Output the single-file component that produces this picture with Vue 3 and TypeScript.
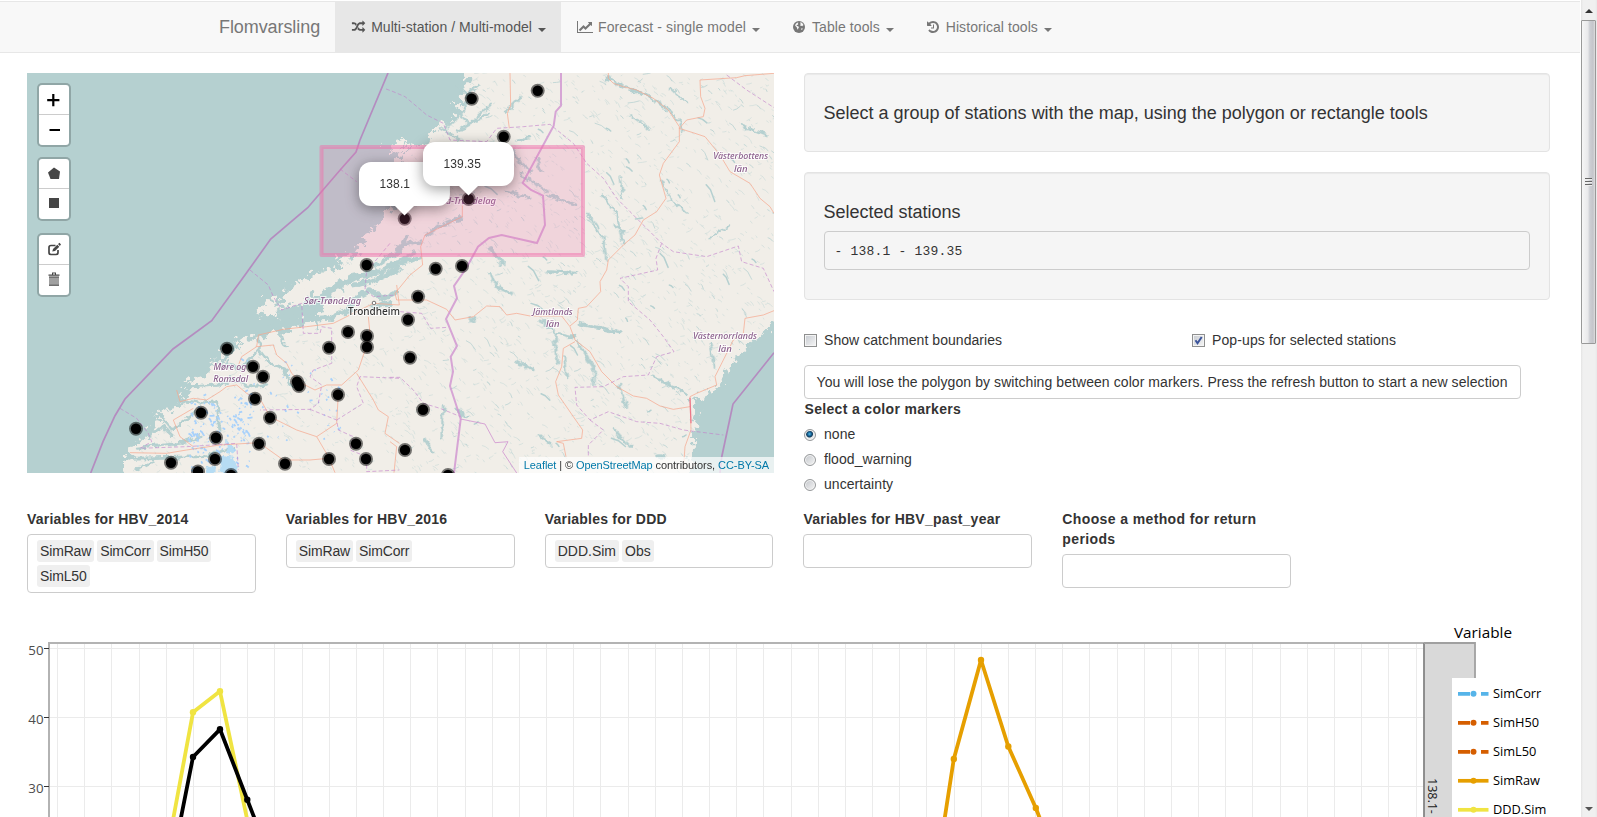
<script setup lang="ts">
interface Popup { id: string; left: number; top: number }
interface VariableSet { label: string; items: string[]; wide?: boolean }
interface Series { name: string; color: string; points: number[][] }
interface LegendEntry { name: string; color: string; dashed: boolean }

const stations: number[][] = [
  [471.7, 98.7], [537.7, 90.7], [503.7, 136.7], [468.7, 199], [404.7, 218.7], [435.7, 268.7], [462, 266],
  [366.7, 265], [227, 348.7], [348, 332], [367, 336], [367, 347], [329, 347.7], [253, 366.7], [263, 376.7],
  [297, 381.7], [299, 386], [338, 394.7], [255, 398.7], [201, 412.7], [270, 417.7], [136, 428.7], [216, 437.7],
  [259, 443.7], [356, 443.7], [171, 462.7], [215, 459], [198, 471.5], [231, 475], [285, 463.7], [329, 459],
  [366, 459], [418, 296.7], [408, 319.7], [410, 357.7], [423, 409.7], [405, 450], [448, 475],
]

const popups: Popup[] = [
  { id: '138.1', left: 332, top: 89 },
  { id: '139.35', left: 396, top: 69 },
]

const variableSets: VariableSet[] = [
  { label: 'Variables for HBV_2014', items: ['SimRaw', 'SimCorr', 'SimH50', 'SimL50'] },
  { label: 'Variables for HBV_2016', items: ['SimRaw', 'SimCorr'] },
  { label: 'Variables for DDD', items: ['DDD.Sim', 'Obs'] },
  { label: 'Variables for HBV_past_year', items: [] },
  { label: 'Choose a method for return periods', items: [], wide: true },
]

const markerModes = ['none', 'flood_warning', 'uncertainty']

// Small deterministic generator, so the lakes keep their place between renders.
let seed = 4711
function rnd(): number {
  seed = (seed * 1664525 + 1013904223) % 4294967296
  return seed / 4294967296
}
function streaks(count: number, x0: number, y0: number, w: number, h: number, size: number): string {
  let d = ''
  for (let i = 0; i < count; i++) {
    const x = x0 + rnd() * w
    const y = y0 + rnd() * h
    const len = size * (0.25 + rnd() * rnd() * 1.6)
    const a = rnd() < 0.8 ? 0.5 + rnd() * 0.6 : -0.6 + rnd() * 0.5
    const dx = Math.cos(a) * len
    const dy = Math.sin(a) * len
    d += `M${x.toFixed(1)} ${y.toFixed(1)}l${(dx * 0.5).toFixed(1)} ${(dy * 0.3).toFixed(1)} ${(dx * 0.5).toFixed(1)} ${(dy * 0.7).toFixed(1)}`
  }
  return d
}
const thinLakes = streaks(1700, 400, 73, 374, 400, 4.5) + streaks(420, 120, 330, 300, 143, 4)
const midLakes = streaks(200, 440, 73, 334, 400, 9)
const bigLakes = streaks(34, 460, 80, 300, 370, 14)
const glaciers = streaks(150, 188, 395, 62, 78, 3.5) + streaks(50, 240, 350, 100, 90, 3)

const gridX = Array.from({ length: 51 }, (_, i) => Math.round(57 + i * 27.17) + 0.5)
const ticks = [
  { label: '50', y: 648.5 },
  { label: '40', y: 717.5 },
  { label: '30', y: 786.5 },
]
const series: Series[] = [
  { name: 'DDD.Sim', color: '#F0E442', points: [[165, 863], [193, 712.3], [220, 691.3], [247.5, 821]] },
  { name: 'Obs', color: '#000000', points: [[170, 873], [193, 757], [220, 729.3], [247.3, 799.7], [273, 866]] },
  { name: 'SimRaw', color: '#E69F00', points: [[930, 914], [953.8, 759], [981, 660], [1008.3, 746.5], [1035.8, 808], [1060, 870]] },
]
const legend: LegendEntry[] = [
  { name: 'SimCorr', color: '#56B4E9', dashed: true },
  { name: 'SimH50', color: '#D55E00', dashed: true },
  { name: 'SimL50', color: '#D55E00', dashed: true },
  { name: 'SimRaw', color: '#E69F00', dashed: false },
  { name: 'DDD.Sim', color: '#F0E442', dashed: false },
]
function toPoints(p: number[][]): string {
  return p.map((c) => c.join(',')).join(' ')
}
</script>

<template>
  <div class="window">
    <div class="page">
      <nav class="navbar">
        <div class="nav-inner">
          <a class="brand">Flomvarsling</a>
          <a class="nav-link active">
            <svg class="fa" viewBox="-256 0 2304 1792"><path d="M666 481q-60 92-137 273-22-45-37-72.500t-40.500-63.500-51-56.500-63-35-81.500-14.500h-224q-14 0-23-9t-9-23v-192q0-14 9-23t23-9h224q250 0 410 225zm1126 799q0 14-9 23l-320 320q-9 9-23 9-13 0-22.500-9.500t-9.500-22.500v-192q-32 0-85 .5t-81 1-73-1-71-5-64-10.500-63-18.500-58-28.500-59-40-55-53.500-56-69.500q59-93 136-273 22 45 37 72.500t40.500 63.500 51 56.500 63 35 81.500 14.500h256v-192q0-14 9-23t23-9q12 0 24 10l319 319q9 9 9 23zm0-896q0 14-9 23l-320 320q-9 9-23 9-13 0-22.500-9.500t-9.500-22.500v-192h-256q-48 0-87 15t-69 45-51 61.500-45 77.500q-32 62-78 171-29 66-49.500 111t-54 105-64 100-74 83-90 68.500-106.500 42-128 16.500h-224q-14 0-23-9t-9-23v-192q0-14 9-23t23-9h224q48 0 87-15t69-45 51-61.500 45-77.500q32-62 78-171 29-66 49.500-111t54-105 64-100 74-83 90-68.500 106.500-42 128-16.500h256v-192q0-14 9-23t23-9q12 0 24 10l319 319q9 9 9 23z" /></svg>
            <span>Multi-station / Multi-model</span><i class="caret"></i>
          </a>
          <a class="nav-link forecast">
            <svg class="fa" viewBox="-128 0 2304 1792"><path d="M2048 1536v128H0V128h128v1408h1920zM1920 288v435q0 21-19.500 29.500T1865 745l-121-121-633 633q-10 10-23 10t-23-10l-233-233-416 416-192-192 585-585q10-10 23-10t23 10l233 233 464-464-121-121q-16-16-7.500-35.500T1453 256h435q14 0 23 9t9 23z" /></svg>
            <span>Forecast - single model</span><i class="caret"></i>
          </a>
          <a class="nav-link">
            <svg class="fa" viewBox="-256 0 2304 1792"><circle cx="896" cy="896" r="768" /><path class="continent" d="M480 520l130-150 160-60 50 70-90 60 80 60-60 110-120 30-60 90 110 50 150 60 60 90-80 110-40 130-70 40-50-160-60-150-120-110-80-130zM1060 270l150 50 200 190 60 150-90 40-60 110-80-60-110 20-80-90 60-120-70-60 70-90zM1210 1050l110 20 50 80-130 140-60-90z" /></svg>
            <span>Table tools</span><i class="caret"></i>
          </a>
          <a class="nav-link">
            <svg class="fa" viewBox="-256 0 2304 1792"><path d="M1664 896q0 156-61 298t-164 245-245 164-298 61q-172 0-327-72.500t-264-204.500q-7-10-6.500-22.500t8.500-20.500l137-138q10-9 25-9 16 2 23 12 73 95 179 147t225 52q104 0 198.500-40.500t163.500-109.500 109.500-163.500 40.500-198.500-40.500-198.500-109.500-163.500-163.500-109.500-198.500-40.500q-98 0-188 35.500t-160 101.500l137 138q31 30 14 69-17 40-59 40h-448q-26 0-45-19t-19-45v-448q0-42 40-59 39-17 69 14l130 129q107-101 244.500-156.500t284.500-55.500q156 0 298 61t245 164 164 245 61 298zm-640-288v448q0 14-9 23t-23 9h-320q-14 0-23-9t-9-23v-64q0-14 9-23t23-9h224v-352q0-14 9-23t23-9h64q14 0 23 9t9 23z" /></svg>
            <span>Historical tools</span><i class="caret"></i>
          </a>
        </div>
      </nav>

      <div class="top-row">
        <div class="map">
          <svg class="map-canvas" width="747" height="400" viewBox="27 73 747 400">
            <defs>
              <filter id="rough" x="-5%" y="-5%" width="110%" height="110%">
                <feTurbulence type="fractalNoise" baseFrequency="0.13" numOctaves="4" seed="8" result="n" />
                <feDisplacementMap in="SourceGraphic" in2="n" scale="24" xChannelSelector="R" yChannelSelector="G" />
              </filter>
              <filter id="wobble" x="-5%" y="-5%" width="110%" height="110%">
                <feTurbulence type="fractalNoise" baseFrequency="0.14" numOctaves="3" seed="3" result="n" />
                <feDisplacementMap in="SourceGraphic" in2="n" scale="8" xChannelSelector="R" yChannelSelector="G" />
              </filter>
              <clipPath id="inland">
                <path d="M468 73L464 100 450 122 430 136 408 152 400 205 384 214 366 240 372 258 345 275 325 296 318 318 270 340 240 352 205 380 185 400 165 420 145 440 132 473H688L694 437 698 412 690 400 714 388 725 368 742 346 774 318V73Z" />
              </clipPath>
            </defs>
            <rect class="sea" x="27" y="73" width="747" height="400" />
            <g filter="url(#rough)">
              <path class="land" d="M468 60L466 88 460 106 450 120 436 130 426 139 413 146 396 158 400 178 394 206 384 214 376 228 356 245 362 254 346 262 336 272 320 284 326 294 332 298 324 308 312 318 288 331 264 335 252 338 236 348 226 360 214 366 196 384 181 402 166 414 154 430 134 445 124 465 126 490H692L693 437 698 412 692 399 715 390 727 370 743 350 757 337 790 306V60Z" />
              <path class="land" d="M386 152l6-9 12-4 6 6-10 9zM258 306l12-8 11 7-4 10-12 4zM282 294l10-9 20-4 12-7 8 4-14 15-20 12-16 2 4-8zM300 284l26-16 12 1-12 13-14 7zM198 378l8-6 5 3-8 8zM184 388l8-7 5 2-7 9zM154 416l10-5 8 4-9 8zM237 339l10-6 8 4-8 8zM354 245l14-8 5 6-10 8zM212 358l10-6 4 4-8 6zM336 262l12-8 4 4-10 7z" />
            </g>
            <g class="fjords" filter="url(#wobble)">
              <g transform="translate(20 270) scale(.333333)">
                <path d="M690 205L770 165 850 150 930 145 990 115" stroke-width="14" />
                <path d="M780 122L860 124 930 62 1000 22 1080 5" stroke-width="20" />
                <path d="M980 130L1000 85 1050 60 1090 85 1128 65M1060 110L1110 100" stroke-width="17" />
                <path d="M715 195L720 240 750 280 795 300 815 355" stroke-width="9" />
                <path d="M600 280L665 295 720 235M630 320L690 350 740 345" stroke-width="10" />
                <path d="M480 390L540 400 590 395 600 480M510 350L600 345 660 325" stroke-width="9" />
                <path d="M420 430L455 480 520 430M385 500L430 470 460 500M355 535L480 520 540 500" stroke-width="9" />
                <path d="M330 565L430 562 560 560 640 530M350 600L400 575" stroke-width="8" />
                <path d="M1070 -15L1138 -60 1160 -100M1000 45L1060 35 1138 -5" stroke-width="15" />
                <path d="M775 190L800 230M880 130L890 180M950 40L970 60" stroke-width="7" />
              </g>
              <g transform="translate(390 65) scale(.333333)">
                <path d="M200 60L245 100 210 150 170 190M225 90L270 60M185 130L240 175 300 120M350 140L390 100M150 190L210 225M200 200L290 150" stroke-width="8" />
                <path d="M110 510L150 480 212 460M70 560L20 600 -30 620M30 545L90 530M0 600L90 580M300 550L340 600" stroke-width="13" />
                <path d="M370 255L395 300 425 320M440 280L455 320M390 325L470 380M380 225L420 215M345 375L420 400M470 390L560 420" stroke-width="8" />
                <path d="M650 40L720 75 780 95 830 130 865 165 880 200M700 400L690 340M640 390L680 450 700 540M590 440L640 520 650 590" stroke-width="7" />
                <path d="M840 70L890 115M720 150L780 195M670 480L700 500M810 345L850 410 890 440M1050 180L1130 210M960 520L1020 480" stroke-width="6" />
              </g>
              <g transform="translate(390 270) scale(.333333)">
                <path d="M300 10L315 45 365 70M450 150L495 185 500 280M500 190L555 200M560 215L610 290 610 345M525 260L530 320M570 160L690 185M475 5L560 10" stroke-width="9" />
                <path d="M160 405L155 500M110 510L130 550M200 420L235 440M450 495L480 520M670 475L720 530M690 345L710 410M790 320L890 375M960 220L975 290M380 275L430 300" stroke-width="8" />
                <ellipse cx="810" cy="558" rx="17" ry="8" class="lake" />
                <ellipse cx="248" cy="150" rx="10" ry="9" class="lake" />
              </g>
            </g>
            <g class="fjords" clip-path="url(#inland)">
              <path :d="thinLakes" stroke-width=".65" opacity=".6" />
              <path :d="midLakes" stroke-width="1" opacity=".75" />
              <path :d="bigLakes" stroke-width="1.500" />
              <path :d="glaciers" class="glacier" stroke-width="1.800" />
            </g>
            <g filter="url(#wobble)">
              <path class="glacier-fill" d="M222 455l12 2 5 10-4 8-16-1zM226 441l6 3 2 8-6 3zM208 466l8 3-2 6-9-2z" />
            </g>

            <g class="roads">
              <g transform="translate(20 270) scale(.333333)">
                <path d="M1045 140L1050 190 1032 250 1015 300 965 345 920 345 885 360 855 345 835 330 815 310 800 280 770 255 760 225 710 230 715 195 790 178 860 170 940 160 1000 130 1060 100 1138 105 1130 45" />
                <path d="M955 370L950 460 890 500 830 480 790 460 750 440 725 395 680 370 650 345 620 350 600 365 560 390 520 385 480 395 470 360M710 230L665 260 650 300" />
                <path d="M890 500L925 560 945 608M1010 310L1060 390 1075 420 1105 440 1095 490 1138 520M330 548L440 550 500 540 600 525 717 518 790 570 870 570 925 565M520 415L460 450 480 500 520 530" />
              </g>
              <g transform="translate(390 65) scale(.333333)">
                <path d="M360 24L362 120 352 145 358 190M655 24L655 40 670 55 700 65 740 75 790 100 835 135 868 185 868 230 820 295 808 330 828 400 800 440 760 465 735 510 700 540 655 585 650 615 630 650 632 680 590 725 565 730 562 765 540 783" />
                <path d="M1152 25L1065 32 1040 38 930 45 932 95 945 130 940 155 890 165 868 190 915 205 945 215 990 270 1020 320 1080 355 1110 400 1140 425 1152 445M217 400L217 455 170 478 105 510 92 545 98 600 60 630 15 685 20 705 110 705" />
              </g>
              <g transform="translate(390 270) scale(.333333)">
                <path d="M110 90L170 118 195 150 250 140 290 108 330 110 350 135 380 130 420 138 515 138 540 170 555 210 600 245 635 305 680 350 730 378 770 385 810 408 850 418 900 410M555 215L520 235 515 290 497 335 505 375 550 440 578 480 575 505 500 515 520 520 528 560M0 515L20 530 12 608" />
                <path d="M1152 122L1120 135 1065 145 1060 190 1030 210 1000 270 975 320 980 345 920 370 900 380 903 480 885 530 880 600" />
                <path class="red-road" d="M900 383L903 460" />
              </g>
            </g>

            <g class="dashes">
              <g transform="translate(20 270) scale(.333333)">
                <path d="M690 0L745 45 760 80 785 120 845 100 850 190 900 190 905 170 935 175 935 280 880 300 870 320 905 345 895 400 870 418 720 420M870 418L950 450 955 480 1000 500 990 540 1040 560 1040 605 1138 600M950 450L1030 400 1010 350 1020 320 1138 325M300 415L350 445 385 490 395 515 360 535 500 530 650 520 655 600M1110 -80L1060 -20 1040 0 1035 60 1060 80 1128 75" />
              </g>
              <g transform="translate(390 65) scale(.333333)">
                <path d="M-12 72L5 78 45 95 75 120 110 150 160 175 180 225 290 230 320 190 400 185 480 178 550 235 590 295 640 340 680 400 720 440 770 490 815 535 850 560 950 575 1045 543 1055 590 1120 610 1152 680M1010 30L1070 75 1152 128M815 535L798 580 803 615 690 640 715 665 715 710 780 765 820 815 852 860 800 875 775 930 700 935 640 965 555 967 560 1020 600 1065 655 1040 740 1070 810 1075 880 1095 1000 1110M600 1065L640 1095 595 1140 595 1175M-150 312L-100 350" />
                <path d="M0 937L30 937 70 975 100 1015 150 1030 212 1055M30 740L95 745 122 790 175 787" />
              </g>
            </g>
            <g class="borders">
              <path d="M388 73L360 140 356 152 341 169 307.700 207.700 270.700 239 245 275 211.700 320.700 173 349 125 399 115 415.700 103 441.700 90.700 473" />
              <path d="M561 73V105.700L555.700 111.700 553.700 125.700 522.700 183 531 190 543 195.700 545 225 537 243 501.700 235 489 238 478 246.700 467 266.700 463 273 454 286 457 298 446 319 457 346 450.700 356.700 453 371.700 450 386 460.700 419 454 473" class="national" />
              <path d="M774 352.700L733 404 721.700 457 720 473" />
              <path d="M460.700 419L485 424 495 442.700 508 441.700 502.700 451.700 516.700 473" class="county" />
            </g>

            <g class="place-names">
              <text x="463" y="203.700" textLength="66" lengthAdjust="spacingAndGlyphs">Nord-Trøndelag</text>
              <text x="740.700" y="159" textLength="55" lengthAdjust="spacingAndGlyphs">Västerbottens</text>
              <text x="740.700" y="171.500">län</text>
              <text x="552.700" y="314.700" textLength="40" lengthAdjust="spacingAndGlyphs">Jämtlands</text>
              <text x="552.700" y="326.500">län</text>
              <text x="725" y="339" textLength="64" lengthAdjust="spacingAndGlyphs">Västernorrlands</text>
              <text x="725" y="351.500">län</text>
              <text x="332.500" y="303.500" textLength="57" lengthAdjust="spacingAndGlyphs">Sør-Trøndelag</text>
              <text x="230" y="369.700" textLength="33" lengthAdjust="spacingAndGlyphs">Møre og</text>
              <text x="230.700" y="382" textLength="35" lengthAdjust="spacingAndGlyphs">Romsdal</text>
              <text x="374" y="314.700" class="town" textLength="52" lengthAdjust="spacingAndGlyphs">Trondheim</text>
            </g>
            <circle cx="374" cy="303" r="1.800" fill="#fff" stroke="#555" stroke-width=".8" />

            <g v-for="(s, i) in stations" :key="i">
              <circle :cx="s[0]" :cy="s[1]" r="7" fill="#000" opacity=".52" />
              <circle :cx="s[0]" :cy="s[1]" r="5.200" fill="#000" />
            </g>
            <rect class="selection" x="321.500" y="147" width="261.500" height="108" />
          </svg>

          <div v-for="p in popups" :key="p.id" class="popup" :style="{ left: p.left + 'px', top: p.top + 'px' }">
            <div class="popup-body">{{ p.id }}</div>
            <div class="tip-box"><div class="tip"></div></div>
          </div>

          <div class="controls">
            <div class="bar">
              <a><svg viewBox="0 0 30 30"><path d="M13.200 9h2.200v5h5v2.200h-5v5h-2.200v-5h-5V14h5z" fill="#000" /></svg></a>
              <a><svg viewBox="0 0 30 30"><path d="M10.500 14h10.500v2H10.500z" fill="#000" /></svg></a>
            </div>
            <div class="bar">
              <a><svg viewBox="0 0 30 30"><path d="M15 8.500L21 12.500 20 20H11.500L9 13.500z" fill="#464646" /></svg></a>
              <a><svg viewBox="0 0 30 30"><rect x="10" y="9" width="10" height="10" fill="#464646" /></svg></a>
            </div>
            <div class="bar edit">
              <a><svg viewBox="0 0 30 30"><path d="M16.500 10.500H12q-2 0-2 2v5q0 2 2 2h5q2 0 2-2v-2.500" fill="none" stroke="#464646" stroke-width="1.700" /><path d="M13.300 16.600l.7-2.700 4.300-4.200 2 2-4.300 4.200zM19 9l1.500-1.300 1.500 1.800L20.800 11z" fill="#464646" /></svg></a>
              <a><svg viewBox="0 0 30 30"><path d="M10 12h10v8.200H10z" fill="#a0a0a0" /><path d="M10 11.500h10v.9H10zM9.500 9.500h11v1.200h-11zM13 7.500h4v.9h-4zM13 7.500h1v2h-1zM16 7.500h1v2h-1zM10 19.700h10v1H10z" fill="#464646" /></svg></a>
            </div>
          </div>
          <div class="attribution"><a>Leaflet</a> | © <a>OpenStreetMap</a> contributors, <a>CC-BY-SA</a></div>
        </div>

        <div class="side">
          <div class="well intro"><h4>Select a group of stations with the map, using the polygon or rectangle tools</h4></div>
          <div class="well chosen">
            <h4>Selected stations</h4>
            <pre>- 138.1 - 139.35</pre>
          </div>
          <div class="checks">
            <label><span class="checkbox"></span>Show catchment boundaries</label>
            <label class="popup-toggle"><span class="checkbox"><svg viewBox="0 0 13 13"><path d="M3.500 6.300L5.500 9.200 9.700 3" fill="none" stroke="#3b549b" stroke-width="2" /></svg></span>Pop-ups for selected stations</label>
          </div>
          <div class="notice">You will lose the polygon by switching between color markers. Press the refresh button to start a new selection</div>
          <div class="group-label">Select a color markers</div>
          <label v-for="(m, i) in markerModes" :key="m" class="radio-line"><span class="radio" :class="{ on: i === 0 }"></span>{{ m }}</label>
        </div>
      </div>

      <div class="variables">
        <div v-for="v in variableSets" :key="v.label" class="variable">
          <div class="variable-label" :class="{ wide: v.wide }">{{ v.label }}</div>
          <div class="select">
            <span v-for="item in v.items" :key="item" class="chip" :class="{ tight: item.startsWith('Sim') }">{{ item }}</span>
          </div>
        </div>
      </div>

      <svg class="chart" width="1580" height="217" viewBox="0 600 1580 217">
        <g stroke="#ebebeb" stroke-width="1">
          <line v-for="x in gridX" :key="x" :x1="x" :x2="x" y1="643" y2="817" />
          <line v-for="t in ticks" :key="t.label" x1="49" x2="1424" :y1="t.y" :y2="t.y" />
        </g>
        <g v-for="s in series" :key="s.name">
          <polyline :points="toPoints(s.points)" fill="none" :stroke="s.color" stroke-width="3.800" stroke-linejoin="round" />
          <circle v-for="(p, i) in s.points" :key="i" :cx="p[0]" :cy="p[1]" r="3.200" :fill="s.color" />
        </g>
        <path d="M49 817V643H1424" fill="none" stroke="#b3b3b3" stroke-width="2" />
        <rect x="1424" y="643" width="51" height="190" fill="#d9d9d9" />
        <path d="M1424 817V643" stroke="#858585" stroke-width="1.800" />
        <path d="M1424 643H1475V817" fill="none" stroke="#a0a0a0" stroke-width="1.800" />
        <g v-for="t in ticks" :key="t.label">
          <line x1="44" x2="49" :y1="t.y" :y2="t.y" stroke="#333" />
          <text x="43.500" :y="t.y + 6" text-anchor="end" class="tick">{{ t.label }}</text>
        </g>
        <text class="strip" transform="translate(1428 778) rotate(90)">138.1-</text>
        <rect x="1452" y="678" width="128" height="150" fill="#fff" />
        <text x="1454" y="637.500" class="legend-title">Variable</text>
        <g v-for="(l, i) in legend" :key="l.name" :transform="`translate(0 ${693.8 + i * 29})`">
          <path :d="l.dashed ? 'M1458 0h12M1481 0h7.500' : 'M1458 0h30.500'" :stroke="l.color" stroke-width="3.700" />
          <circle cx="1473.500" cy="0" r="3" :fill="l.color" />
          <text x="1493" y="4" class="legend-text">{{ l.name }}</text>
        </g>
      </svg>
    </div>

    <div class="scrollbar">
      <div class="arrow"><svg width="8" height="4" viewBox="0 0 8 4"><path d="M0 4L4 0 8 4z" fill="#333" /></svg></div>
      <div class="thumb"><i></i><i></i><i></i></div>
      <div class="arrow down"><svg width="8" height="4" viewBox="0 0 8 4"><path d="M0 0L4 4 8 0z" fill="#555" /></svg></div>
    </div>
  </div>
</template>

<style>
html, body { margin: 0; overflow: hidden; background: #fff; }
</style>

<style scoped>
* { box-sizing: border-box; }
.window { display: flex; width: 1597px; height: 817px; overflow: hidden; font: 14px/20px "Liberation Sans", Arial, sans-serif; color: #333; background: #fff; }
.page { width: 1581px; padding-top: 1px; }
.navbar { width: 1580px; height: 52px; background: #f8f8f8; border: solid #e7e7e7; border-width: 1px 0; margin-bottom: 20px; }
.nav-inner { display: flex; height: 50px; padding-left: 204px; color: #777; }
.brand { width: 131px; padding: 15px; font-size: 18px; line-height: 20px; letter-spacing: -.08px; }
.nav-link { display: flex; align-items: center; height: 50px; padding: 0 15px; white-space: pre; letter-spacing: .07px; }
.nav-link.active { width: 226px; background: #e7e7e7; color: #555; letter-spacing: .05px; }
.nav-link.forecast { letter-spacing: .11px; }
.fa { width: 18px; height: 14px; margin-right: 4px; fill: currentColor; }
.continent { fill: #f8f8f8; }
.caret { border-top: 4px solid currentColor; border-left: 4px solid transparent; border-right: 4px solid transparent; margin: 5px 0 0 6px; }

.top-row { display: flex; height: 436px; padding-left: 27px; gap: 29.500px; }
.map { position: relative; width: 747px; height: 400px; overflow: hidden; }
.map-canvas { display: block; }
.sea { fill: #b5d0d0; }
.land { fill: #f1eee8; }
.lake { fill: #b5d0d0; stroke: none; }
.fjords path { fill: none; stroke: #b5d0d0; stroke-linecap: round; stroke-linejoin: round; }
.fjords .glacier { stroke: #a8d1fb; stroke-linecap: butt; }
.glacier-fill { fill: #b6dcf3; }
.roads path { fill: none; stroke: #f6a58c; stroke-width: 2.800; stroke-linejoin: round; opacity: .75; }
.roads .red-road { stroke: #e8607c; stroke-width: 4; }
.dashes path { fill: none; stroke: #c27fcb; stroke-width: 2.800; stroke-dasharray: 12 7; opacity: .66; }
.borders path { fill: none; stroke: #b47abb; stroke-width: 1.700; opacity: .8; }
.borders .national { stroke: #cf92d0; stroke-width: 2; }
.borders .county { stroke: #cf92d0; stroke-width: 1; }
.place-names text { font: italic 500 9.500px "Noto Sans", sans-serif; fill: #8b5f8d; text-anchor: middle; stroke: #fff; stroke-opacity: .75; stroke-width: 2px; paint-order: stroke; }
.place-names .town { font-style: normal; font-size: 10px; fill: #333; }
.selection { fill: #f06eaa; fill-opacity: .2; stroke: #f06eaa; stroke-opacity: .5; stroke-width: 4; stroke-linejoin: round; }

.popup { position: absolute; width: 91px; }
.popup-body { height: 44px; padding: 14px 20.500px; border-radius: 12px; background: #fff; box-shadow: 0 3px 14px rgba(0, 0, 0, .4); font-size: 12px; line-height: 17px; letter-spacing: .12px; }
.tip-box { width: 40px; height: 20px; margin: 0 auto; overflow: hidden; position: relative; }
.tip { width: 17px; height: 17px; margin: -11px auto 0; transform: rotate(45deg); background: #fff; box-shadow: 0 3px 14px rgba(0, 0, 0, .4); }

.controls { position: absolute; left: 10px; top: 10px; display: flex; flex-direction: column; gap: 10px; }
.bar { width: 34px; height: 64px; border: 2px solid rgba(0, 0, 0, .2); border-radius: 5px; background: #fff; background-clip: padding-box; }
.bar.edit { margin-top: 2px; }
.bar a { display: block; height: 30px; }
.bar a:first-child { border-bottom: 1px solid #ccc; }
.bar svg { display: block; width: 30px; height: 30px; }
.attribution { position: absolute; right: 0; bottom: 0; height: 16px; padding: 0 5px; font-size: 11px; line-height: 16px; letter-spacing: -.08px; background: rgba(255, 255, 255, .7); white-space: nowrap; }
.attribution a { color: #0078a8; }

.side { width: 746.500px; }
.well { padding: 19px; border: 1px solid #e3e3e3; border-radius: 4px; background: #f5f5f5; box-shadow: inset 0 1px 1px rgba(0, 0, 0, .05); }
.intro { height: 79px; margin-bottom: 20px; }
.chosen { height: 128px; }
h4 { margin: 10px 0 9px; font-size: 18px; line-height: 20px; font-weight: 500; }
pre { margin: 0; height: 39px; padding: 10px 10px 8px; border: 1px solid #ccc; border-radius: 4px; font: 13px/19px "Liberation Mono", monospace; letter-spacing: .2px; }
.checks { display: flex; margin-top: 30px; letter-spacing: .06px; }
.checks label { display: flex; flex: none; width: 388px; }
.checks .popup-toggle { width: auto; letter-spacing: .12px; }
.checkbox { width: 13px; height: 13px; margin: 4px 7.500px 0 0; border: 1px solid #8e8f8f; background: linear-gradient(135deg, #c6cad0, #f6f6f6); box-shadow: inset 0 0 0 1px #f4f4f4; }
.checkbox svg { display: block; width: 13px; height: 13px; margin: -1px; }
.notice { width: 717px; height: 34px; margin-top: 15px; padding: 6px 12px; border: 1px solid #ccc; border-radius: 4px; letter-spacing: .075px; white-space: nowrap; }
.group-label { padding-left: 1px; font-weight: bold; margin-bottom: 5px; letter-spacing: .33px; }
.radio-line { display: flex; margin-bottom: 5px; letter-spacing: .06px; }
.radio { width: 12px; height: 12px; margin: 5px 8.500px 0 0; border: 1px solid #97999b; border-radius: 50%; background: linear-gradient(135deg, #c3c6cb, #f5f5f5); box-shadow: inset 0 0 0 1px #f4f4f4; }
.radio.on { background: radial-gradient(circle at 45% 40%, #52bbe8 0, #165f91 2px, #123c5b 3px, #e5e8ea 4px); }

.variables { display: flex; height: 91px; padding-left: 12px; }
.variable { width: 258.830px; padding: 0 15px; }
.variable-label { margin-bottom: 5px; font-weight: bold; letter-spacing: .23px; }
.variable-label.wide { letter-spacing: .38px; }
.select { display: flex; flex-wrap: wrap; align-content: flex-start; gap: 3px; min-height: 34px; padding: 5px 9px; border: 1px solid #ccc; border-radius: 4px; }
.chip { height: 22px; padding: 1px 3px; border-radius: 3px; background: #efefef; }
.chip.tight { letter-spacing: -.15px; }

.chart { display: block; font-family: "Open Sans", Verdana, sans-serif; }
.tick { font-size: 13.300px; fill: #4d4d4d; }
.strip { font-size: 12.500px; fill: #1a1a1a; }
.legend-title { font-size: 15.300px; fill: #000; }
.legend-text { font-size: 12.800px; fill: #000; }

.scrollbar { display: flex; flex-direction: column; width: 16px; background: linear-gradient(90deg, #e3e3e3, #f0f0f0 2px 14px, #e8e8e8); }
.arrow { display: flex; align-items: center; justify-content: center; height: 20px; padding-top: 2px; }
.arrow.down { margin-top: auto; height: 17px; padding: 0; }
.thumb { display: flex; flex-direction: column; align-items: center; justify-content: center; gap: 1px; width: 15px; height: 324px; border: 1px solid #999; border-radius: 1px; background: linear-gradient(90deg, #f6f6f6, #e9e9eb 45%, #cdcfd4 60%, #c4c5ca 85%, #dedede); }
.thumb i { width: 7px; height: 2px; background: #666; border-bottom: 1px solid #eee; }
</style>
